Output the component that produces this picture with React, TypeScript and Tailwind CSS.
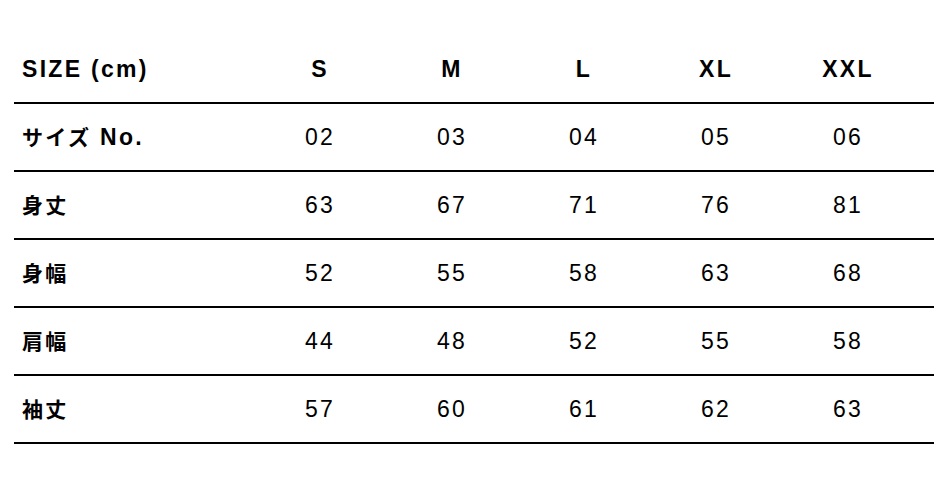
const sizes = ['S', 'M', 'L', 'XL', 'XXL'];

const rows: { label: string; suffix?: string; values: string[] }[] = [
  { label: 'サイズ', suffix: ' No.', values: ['02', '03', '04', '05', '06'] },
  { label: '身丈', values: ['63', '67', '71', '76', '81'] },
  { label: '身幅', values: ['52', '55', '58', '63', '68'] },
  { label: '肩幅', values: ['44', '48', '52', '55', '58'] },
  { label: '袖丈', values: ['57', '60', '61', '62', '63'] },
];

const font = { fontFamily: '"Liberation Sans", "Noto Sans CJK JP", sans-serif' };

export default function App() {
  return (
    <div className="min-h-screen bg-white pt-[36px] pl-[14px]" style={font}>
      <div className="w-[920px] text-black text-[23px] tracking-[0.1em]">
        <div className="grid grid-cols-[240px_repeat(5,132px)] items-center h-[68px] border-b-2 border-black">
          <div className="pl-[8px] font-bold">SIZE (cm)</div>
          {sizes.map((s) => (
            <div key={s} className="text-center font-bold">
              {s}
            </div>
          ))}
        </div>
        {rows.map((row) => (
          <div
            key={row.label}
            className="grid grid-cols-[240px_repeat(5,132px)] items-center h-[68px] border-b-2 border-black"
          >
            <div className="pl-[8px] font-bold">
              <span className="text-[21px]">{row.label}</span>
              {row.suffix && <span className="whitespace-pre">{row.suffix}</span>}
            </div>
            {row.values.map((v, i) => (
              <div key={i} className="text-center">
                {v}
              </div>
            ))}
          </div>
        ))}
      </div>
    </div>
  );
}
